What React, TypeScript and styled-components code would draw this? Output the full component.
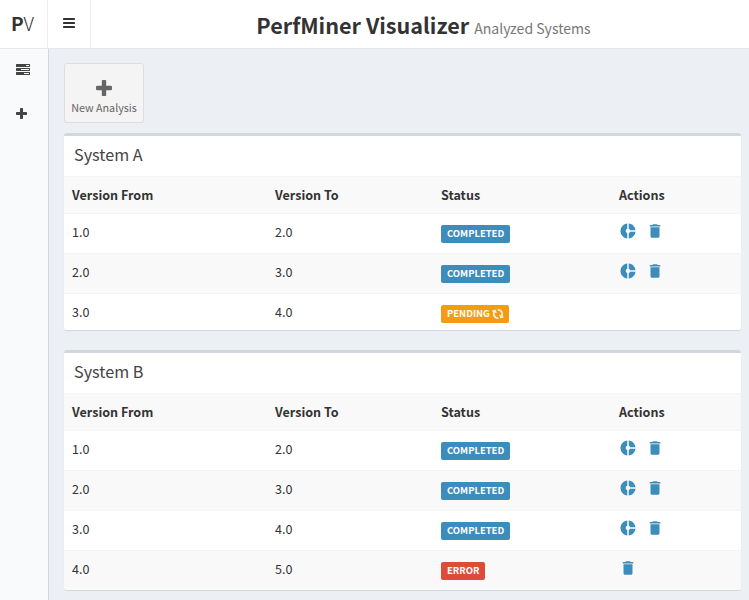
import React from "react";
import styled, { createGlobalStyle } from "styled-components";
import { MdDelete, MdDonutSmall } from "react-icons/md";

const GlobalStyle = createGlobalStyle`
  * { box-sizing: border-box; }
  body {
    margin: 0;
    overflow: hidden;
    background: #ecf0f5;
    color: #333;
    font-family: "Noto Sans CJK SC", "Noto Sans", sans-serif;
    font-size: 12.55px;
    line-height: 20px;
  }
`;

const Page = styled.div`
  display: grid;
  grid-template-rows: 49px 1fr;
  width: 749px;
  height: 600px;
  overflow: hidden;
`;

const TopBar = styled.header`
  display: flex;
  background: #fff;
  border-bottom: 1px solid #e4e7eb;
`;

const Logo = styled.div`
  width: 48px;
  border-right: 1px solid #eee;
  text-align: center;
  font-size: 19px;
  line-height: 46px;
  padding-right: 2px;
  font-weight: 300;

  b { font-weight: 700; }
`;

const MenuToggle = styled.button`
  display: flex;
  align-items: center;
  justify-content: center;
  width: 43px;
  padding: 0 0 2px;
  border: 0;
  border-right: 1px solid #eee;
  background: none;
  color: #333;
`;

const Heading = styled.h1`
  flex: 1;
  margin: 0;
  padding-left: 7px;
  text-align: center;
  font-size: 21.6px;
  font-weight: 700;
  line-height: 50px;
  white-space: nowrap;
`;

const SubHeading = styled.small`
  margin-left: 5px;
  font-size: 14.05px;
  font-weight: 400;
  color: #777;
`;

const Body = styled.div`
  display: grid;
  grid-template-columns: 49px 1fr;
  min-height: 0;
`;

const Sidebar = styled.nav`
  display: flex;
  flex-direction: column;
  background: #f9fafc;
  border-right: 1px solid #d2d6de;
`;

const SidebarItem = styled.a`
  display: flex;
  align-items: center;
  height: 44px;
  padding: 0 0 4px 16px;
  color: #444;
`;

const Main = styled.main`
  display: flex;
  flex-direction: column;
  align-items: stretch;
  min-width: 0;
  padding: 14px 8px 0 15px;
`;

const NewButton = styled.button`
  display: flex;
  flex-direction: column;
  align-items: center;
  justify-content: flex-start;
  width: 80px;
  height: 60px;
  margin: 0 0 10px;
  padding: 16px 0 0;
  border: 1px solid #ddd;
  border-radius: 3px;
  background: #f4f4f4;
  color: #666;
  font-family: inherit;
  font-size: 10.75px;
  line-height: 17px;
  white-space: nowrap;
`;

const ButtonLabel = styled.span`
  margin-top: 3px;
`;

const Box = styled.section`
  flex: none;
  margin-bottom: 20px;
  border-top: 3px solid #d2d6de;
  border-radius: 3px;
  background: #fff;
  box-shadow: 0 1px 1px rgba(0, 0, 0, 0.1);
  overflow: hidden;
`;

const BoxTitle = styled.h3`
  margin: 0;
  height: 40px;
  padding-left: 10px;
  color: #444;
  font-size: 16.2px;
  font-weight: 400;
  line-height: 36px;
`;

const Row = styled.div<{ $shaded?: boolean; $head?: boolean; $short?: boolean }>`
  display: grid;
  grid-template-columns: 203px 166px 178px 1fr;
  height: ${(p) => (p.$head || p.$short ? 37 : 40)}px;
  padding: 8px 0 0 8px;
  border-top: 1px solid #f4f4f4;
  background: ${(p) => (p.$shaded ? "#f9f9f9" : "#fff")};
  font-weight: ${(p) => (p.$head ? 700 : 400)};
`;

const Cell = styled.div`
  height: 20px;
`;

type Status = "COMPLETED" | "PENDING" | "ERROR";

const statusColor: Record<Status, string> = {
  COMPLETED: "#3c8dbc",
  PENDING: "#f39c12",
  ERROR: "#dd4b39",
};

const Badge = styled.span<{ $status: Status }>`
  display: inline-flex;
  align-items: center;
  gap: 3px;
  height: 18px;
  margin-top: 3px;
  padding: 0 6px;
  border-radius: 2px;
  background: ${(p) => statusColor[p.$status]};
  color: #fff;
  font-size: 9.45px;
  font-weight: 700;
  line-height: 16px;
  vertical-align: top;
`;

const BadgeText = styled.span`
  height: 18px;
`;

const Actions = styled.div`
  display: flex;
  gap: 9px;
  color: #3c8dbc;
`;

const BarsIcon = () => (
  <svg width="12" height="10" viewBox="0 0 12 10" fill="currentColor">
    <rect width="12" height="2" rx="0.4" />
    <rect y="4" width="12" height="2" rx="0.4" />
    <rect y="8" width="12" height="2" rx="0.4" />
  </svg>
);

const TasksIcon = () => (
  <svg width="14" height="11" viewBox="0 0 14 11" fill="currentColor">
    <path
      fillRule="evenodd"
      d="M.5 0h13q.5 0 .5.5v2q0 .5-.5.5H.5Q0 3 0 2.5v-2Q0 0 .5 0zM10 1v1h3V1zM.5 4h13q.5 0 .5.5v2q0 .5-.5.5H.5Q0 7 0 6.500v-2Q0 4 .5 4zM5 5v1h8V5zM.5 8h13q.5 0 .5.5v2q0 .5-.5.5H.5q-.5 0-.5-.5v-2Q0 8 .5 8zM8 9v1h5V9z"
    />
  </svg>
);

const PlusIcon = ({ size }: { size: number }) => (
  <svg width={size} height={size} viewBox="0 0 1408 1408" fill="currentColor">
    <path d="M1408 608v192q0 40-28 68t-68 28H896v416q0 40-28 68t-68 28H608q-40 0-68-28t-28-68V896H96q-40 0-68-28t-28-68V608q0-40 28-68t68-28h416V96q0-40 28-68t68-28h192q40 0 68 28t28 68v416h416q40 0 68 28t28 68z" />
  </svg>
);

const RefreshIcon = () => (
  <svg width="10" height="10" viewBox="0 0 1536 1536" fill="currentColor" fillOpacity="0.88" overflow="visible">
    <path
      transform="rotate(-108 768 768) translate(0 -128)"
      d="M1511 1056q0 5-1 7-64 268-268 434.500t-478 166.500q-146 0-282.500-55t-243.500-157l-129 129q-19 19-45 19t-45-19-19-45v-448q0-26 19-45t45-19h448q26 0 45 19t19 45-19 45l-137 137q71 66 161 102t187 36q134 0 250-65t186-179q11-17 53-117 8-23 30-23h192q13 0 22.500 9.500t9.500 22.500zm25-800v448q0 26-19 45t-45 19h-448q-26 0-45-19t-19-45 19-45l138-138q-148-137-349-137-134 0-250 65t-186 179q-11 17-53 117-8 23-30 23H50q-13 0-22.500-9.500T18 704v-7q65-268 270-434.500T768 96q146 0 284 55.500t245 156.500l130-129q19-19 45-19t45 19 19 45z"
    />
  </svg>
);

interface Analysis {
  from: string;
  to: string;
  status: Status;
}

const systems: { name: string; analyses: Analysis[] }[] = [
  {
    name: "System A",
    analyses: [
      { from: "1.0", to: "2.0", status: "COMPLETED" },
      { from: "2.0", to: "3.0", status: "COMPLETED" },
      { from: "3.0", to: "4.0", status: "PENDING" },
    ],
  },
  {
    name: "System B",
    analyses: [
      { from: "1.0", to: "2.0", status: "COMPLETED" },
      { from: "2.0", to: "3.0", status: "COMPLETED" },
      { from: "3.0", to: "4.0", status: "COMPLETED" },
      { from: "4.0", to: "5.0", status: "ERROR" },
    ],
  },
];

const AnalysisRow = ({ item, shaded }: { item: Analysis; shaded: boolean }) => (
  <Row $shaded={shaded} $short={item.status === "PENDING"}>
    <Cell>{item.from}</Cell>
    <Cell>{item.to}</Cell>
    <Cell>
      <Badge $status={item.status}>
        <BadgeText>{item.status}</BadgeText>
        {item.status === "PENDING" && <RefreshIcon />}
      </Badge>
    </Cell>
    <Actions>
      {item.status === "COMPLETED" && <MdDonutSmall size={18} />}
      {item.status !== "PENDING" && <MdDelete size={18} />}
    </Actions>
  </Row>
);

export default function App() {
  return (
    <>
      <GlobalStyle />
      <Page>
        <TopBar>
          <Logo>
            <b>P</b>V
          </Logo>
          <MenuToggle aria-label="Toggle navigation">
            <BarsIcon />
          </MenuToggle>
          <Heading>
            PerfMiner Visualizer
            <SubHeading>Analyzed Systems</SubHeading>
          </Heading>
        </TopBar>
        <Body>
          <Sidebar>
            <SidebarItem>
              <TasksIcon />
            </SidebarItem>
            <SidebarItem>
              <PlusIcon size={11} />
            </SidebarItem>
          </Sidebar>
          <Main>
            <NewButton>
              <PlusIcon size={16} />
              <ButtonLabel>New Analysis</ButtonLabel>
            </NewButton>
            {systems.map((system) => (
              <Box key={system.name}>
                <BoxTitle>{system.name}</BoxTitle>
                <Row $head $shaded>
                  <Cell>Version From</Cell>
                  <Cell>Version To</Cell>
                  <Cell>Status</Cell>
                  <Cell>Actions</Cell>
                </Row>
                {system.analyses.map((item, i) => (
                  <AnalysisRow key={item.from} item={item} shaded={i % 2 === 1} />
                ))}
              </Box>
            ))}
          </Main>
        </Body>
      </Page>
    </>
  );
}
